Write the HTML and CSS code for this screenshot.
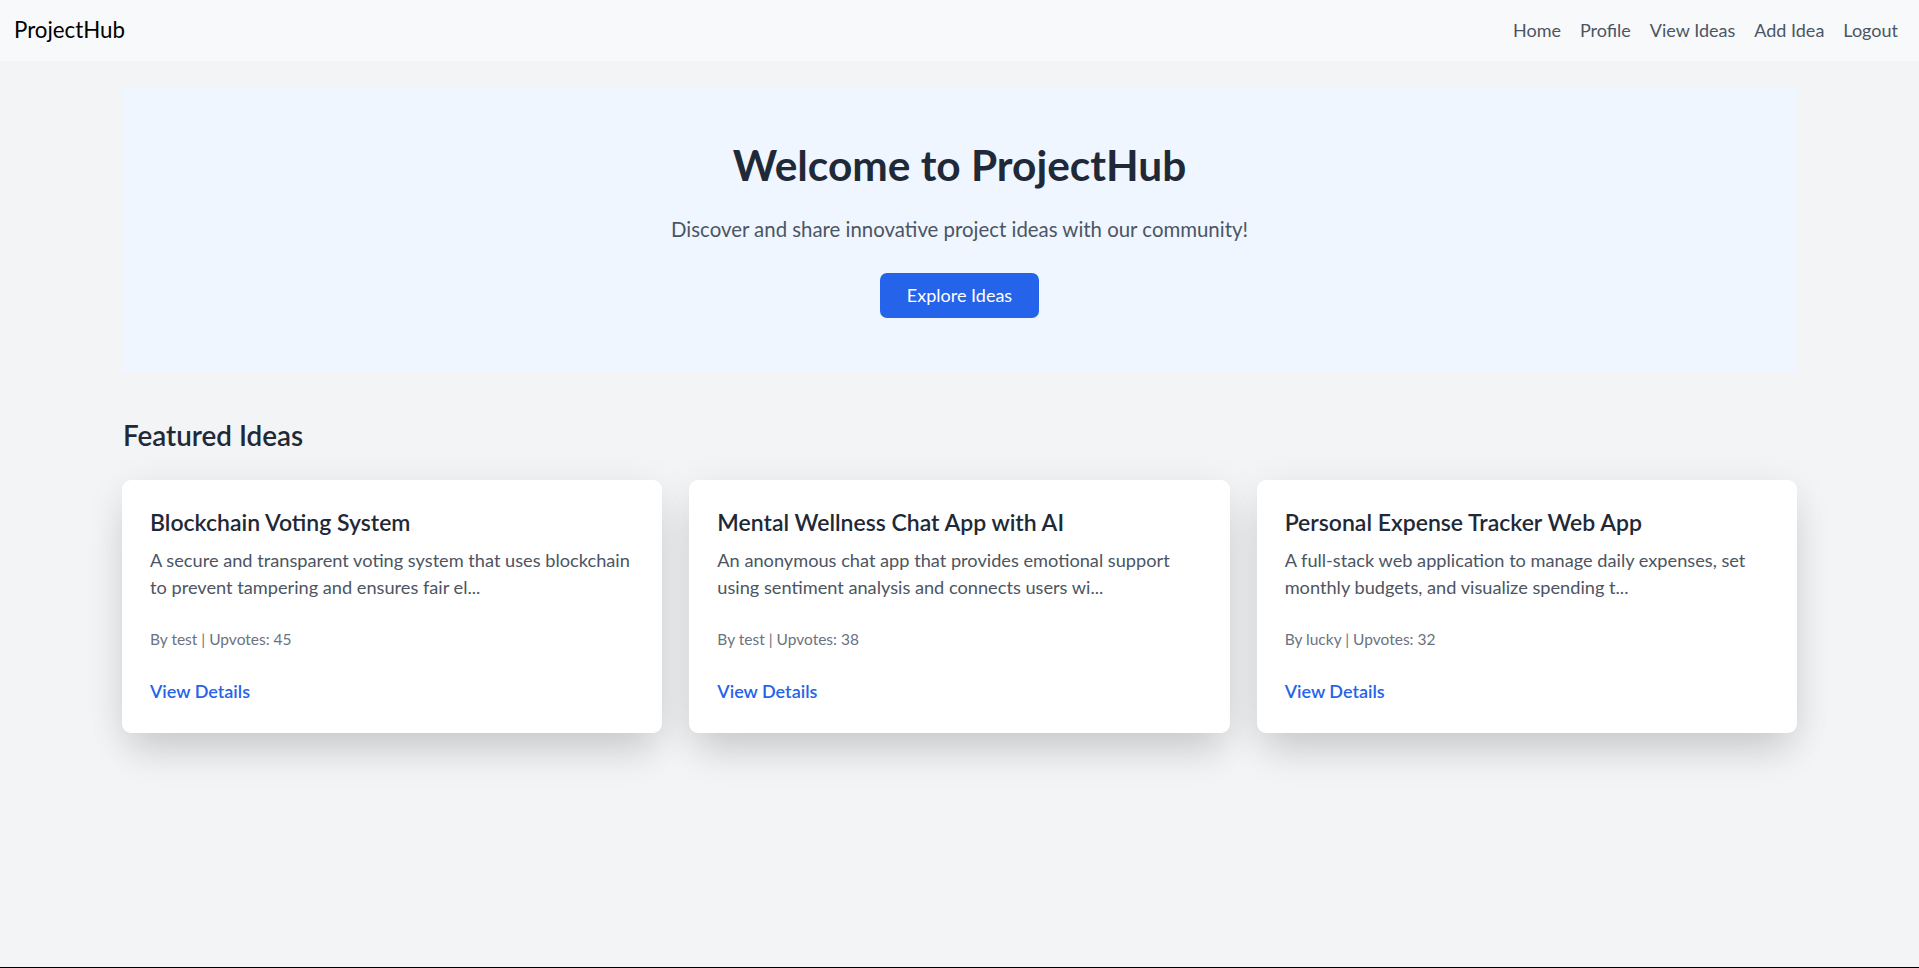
FILE: index.html
```html
<!DOCTYPE html>
<html lang="en">
<head>
<meta charset="utf-8">
<title>ProjectHub</title>
<link rel="stylesheet" href="styles.css">
</head>
<body>
<div class="page">
  <nav class="navbar">
    <a class="brand" href="#">ProjectHub</a>
    <div class="nav-links">
      <a href="#">Home</a>
      <a href="#">Profile</a>
      <a href="#">View Ideas</a>
      <a href="#">Add Idea</a>
      <a href="#">Logout</a>
    </div>
  </nav>
  <main class="container">
    <section class="hero">
      <h1 class="hero-title">Welcome to ProjectHub</h1>
      <p class="hero-sub">Discover and share innovative project ideas with our community!</p>
      <a class="btn" href="#">Explore Ideas</a>
    </section>
    <h2 class="section-title">Featured Ideas</h2>
    <div class="cards">
      <div class="card">
        <h3 class="card-title">Blockchain Voting System</h3>
        <p class="card-desc">A secure and transparent voting system that uses blockchain to prevent tampering and ensures fair el...</p>
        <p class="card-meta">By test | Upvotes: 45</p>
        <a class="card-link" href="#">View Details</a>
      </div>
      <div class="card">
        <h3 class="card-title">Mental Wellness Chat App with AI</h3>
        <p class="card-desc">An anonymous chat app that provides emotional support using sentiment analysis and connects users wi...</p>
        <p class="card-meta">By test | Upvotes: 38</p>
        <a class="card-link" href="#">View Details</a>
      </div>
      <div class="card">
        <h3 class="card-title">Personal Expense Tracker Web App</h3>
        <p class="card-desc">A full-stack web application to manage daily expenses, set monthly budgets, and visualize spending t...</p>
        <p class="card-meta">By lucky | Upvotes: 32</p>
        <a class="card-link" href="#">View Details</a>
      </div>
    </div>
  </main>
</div>
</body>
</html>
```

FILE: styles.css
```css
* { box-sizing: border-box; }
html, body { margin: 0; padding: 0; }
body {
  background: #f3f4f6;
  font-family: Lato, "Noto Sans", "Liberation Sans", sans-serif;
  color: #1f2937;
}
a { text-decoration: none; }
.page {
  min-height: 968px;
  border-bottom: 1px solid #000;
}
.navbar {
  height: 61px;
  background: #f8f9fa;
  display: flex;
  align-items: center;
  justify-content: space-between;
  padding: 0 21px 2px 14px;
}
.brand {
  font-size: 22.3px;
  color: #000;
}
.nav-links {
  display: flex;
  gap: 19px;
}
.nav-links a {
  font-size: 18px;
  color: #4b5563;
}
.container {
  width: 1675px;
  margin: 0 auto;
  padding-top: 27px;
}
.hero {
  background: #eff6ff;
  height: 284px;
  padding-top: 54px;
  text-align: center;
}
.hero-title {
  margin: 0;
  font-size: 42.4px;
  line-height: 45px;
  font-weight: 700;
  color: #1f2937;
}
.hero-sub {
  margin: 27px 0 0;
  font-size: 20.4px;
  line-height: 31.5px;
  color: #4b5563;
}
.btn {
  display: inline-block;
  margin-top: 27px;
  background: #2563eb;
  color: #fff;
  font-size: 18px;
  line-height: 27px;
  padding: 9px 27px;
  border-radius: 7px;
}
.section-title {
  margin: 46px 0 26px 1px;
  font-size: 27.8px;
  line-height: 36px;
  font-weight: 600;
  color: #1f2937;
}
.cards {
  display: grid;
  grid-template-columns: repeat(3, 1fr);
  gap: 27px;
}
.card {
  background: #fff;
  border-radius: 9px;
  padding: 27px 28px 28px;
  box-shadow: 0 24px 40px -8px rgba(0,0,0,0.14), 0 6px 40px rgba(0,0,0,0.07);
  display: flex;
  flex-direction: column;
  align-items: flex-start;
}
.card-title {
  margin: 0;
  font-size: 23px;
  line-height: 31.5px;
  font-weight: 600;
  color: #1f2937;
}
.card-desc {
  margin: 8px 0 0;
  font-size: 18.2px;
  line-height: 27px;
  color: #4b5563;
}
.card-meta {
  margin: 27px 0 0;
  font-size: 15.5px;
  line-height: 22.5px;
  color: #6b7280;
}
.card-link {
  margin-top: 28px;
  font-size: 18px;
  line-height: 27px;
  font-weight: 600;
  color: #2563eb;
}
```
